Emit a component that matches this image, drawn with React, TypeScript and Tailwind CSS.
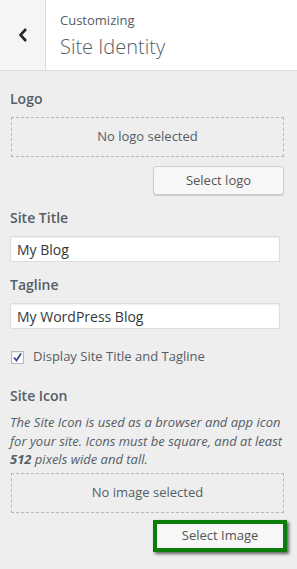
import React from "react";

export default function App() {
  const font = { fontFamily: '"Open Sans", "Noto Sans", sans-serif' };
  return (
    <div className="w-[297px] h-[569px] bg-[#eeeeee] overflow-hidden text-[#555d66]" style={font}>
      <div className="flex h-[71px] bg-white border-b border-[#dddddd]">
        <div className="w-[46px] bg-[#f5f5f5] border-r border-[#dddddd] flex items-center justify-center">
          <svg width="12" height="16" viewBox="0 0 12 16">
            <path d="M9 2 L3.5 8 L9 14" fill="none" stroke="#23282d" strokeWidth="2.6" />
          </svg>
        </div>
        <div className="pl-[14px] pt-[11px]">
          <div className="text-[13px] leading-[18px] text-[#555d66]">Customizing</div>
          <div className="text-[20px] leading-[28px] font-light text-[#555d66] mt-[4px]">Site Identity</div>
        </div>
      </div>

      <div className="pl-[10px] pr-[13px]">
        <div className="mt-[18px] text-[14px] leading-[20px] font-semibold text-[#555d66]">Logo</div>
        <div className="mt-[8px] ml-[1px] h-[40px] border border-dashed border-[#b4b9be] flex items-center justify-center text-[13px] text-[#555d66]">
          No logo selected
        </div>
        <div className="flex justify-end mt-[9px]">
          <button className="w-[131px] h-[29px] bg-[#f7f7f7] border border-[#cccccc] rounded-[3px] shadow-[0_1px_0_#cccccc] text-[13px] text-[#555555]">
            Select logo
          </button>
        </div>

        <div className="mt-[13px] text-[14px] leading-[20px] font-semibold text-[#555d66]">Site Title</div>
        <div className="mt-[8px] w-[270px] h-[26px] bg-white border border-[#dddddd] shadow-[inset_0_1px_2px_rgba(0,0,0,0.07)] flex items-center pl-[6px] text-[14px] text-[#32373c]">
          My Blog
        </div>

        <div className="mt-[13px] text-[14px] leading-[20px] font-semibold text-[#555d66]">Tagline</div>
        <div className="mt-[8px] w-[270px] h-[26px] bg-white border border-[#dddddd] shadow-[inset_0_1px_2px_rgba(0,0,0,0.07)] flex items-center pl-[6px] text-[14px] text-[#32373c]">
          My WordPress Blog
        </div>

        <div className="mt-[18px] flex items-center h-[20px]">
          <div className="ml-[1px] w-[13px] h-[13px] bg-white border border-[#b4b9be] shadow-[inset_0_1px_2px_rgba(0,0,0,0.1)] flex items-center justify-center">
            <svg width="11" height="11" viewBox="0 0 11 11">
              <path d="M2 5.5 L4.5 8.5 L9 1.5" fill="none" stroke="#2f4f96" strokeWidth="1.8" />
            </svg>
          </div>
          <span className="ml-[9px] text-[13px] text-[#555d66]">Display Site Title and Tagline</span>
        </div>

        <div className="mt-[19px] text-[14px] leading-[20px] font-semibold text-[#555d66]">Site Icon</div>
        <div className="mt-[7px] text-[13px] leading-[18.5px] italic text-[#555d66]">
          The Site Icon is used as a browser and app icon for your site. Icons must be square, and at least <strong>512</strong> pixels wide and tall.
        </div>
        <div className="mt-[4px] ml-[1px] h-[40px] border border-dashed border-[#b4b9be] flex items-center justify-center text-[13px] text-[#555d66]">
          No image selected
        </div>
        <div className="flex justify-end mt-[7px] mr-[-3px]">
          <div className="w-[134px] h-[32px] border-4 border-[#0b7d0b] shadow-[2px_2px_3px_rgba(0,0,0,0.6)] bg-[#f7f7f7] flex items-center justify-center text-[13px] text-[#555555]">
            Select Image
          </div>
        </div>
      </div>
    </div>
  );
}
